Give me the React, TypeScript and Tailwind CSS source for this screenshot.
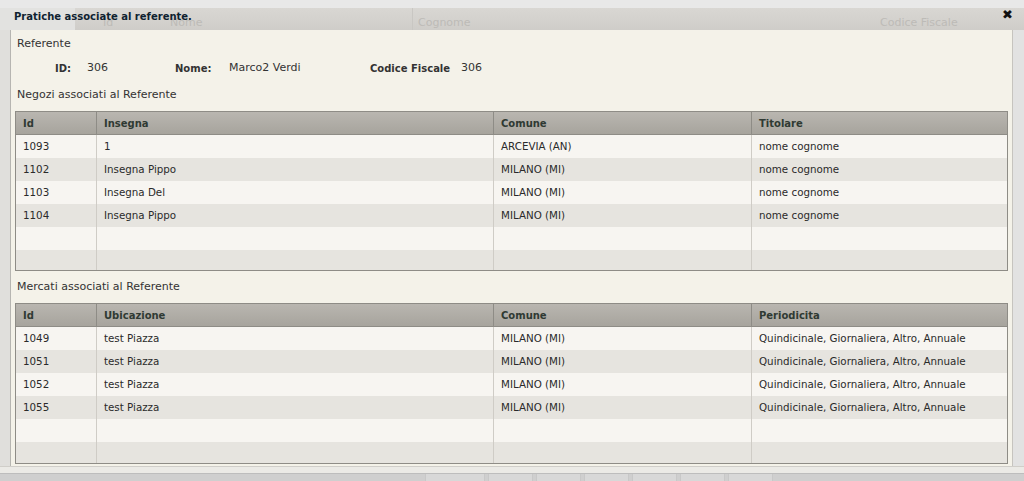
const negozi = [
  ['1093', '1', 'ARCEVIA (AN)', 'nome cognome'],
  ['1102', 'Insegna Pippo', 'MILANO (MI)', 'nome cognome'],
  ['1103', 'Insegna Del', 'MILANO (MI)', 'nome cognome'],
  ['1104', 'Insegna Pippo', 'MILANO (MI)', 'nome cognome'],
];

const mercati = [
  ['1049', 'test Piazza', 'MILANO (MI)', 'Quindicinale, Giornaliera, Altro, Annuale'],
  ['1051', 'test Piazza', 'MILANO (MI)', 'Quindicinale, Giornaliera, Altro, Annuale'],
  ['1052', 'test Piazza', 'MILANO (MI)', 'Quindicinale, Giornaliera, Altro, Annuale'],
  ['1055', 'test Piazza', 'MILANO (MI)', 'Quindicinale, Giornaliera, Altro, Annuale'],
];

const cols = ['w-[80px]', 'w-[397px]', 'w-[258px]', 'flex-1'];

function Grid({ headers, rows, last }: { headers: string[]; rows: string[][]; last: string }) {
  const filled = [...rows, ['', '', '', ''], ['', '', '', '']];
  return (
    <div className="mx-[4px] border border-[#8e8c86] bg-[#f7f5f1]">
      <div className="flex h-[23px] bg-gradient-to-b from-[#b9b6b0] to-[#a7a49d] border-b border-[#8e8c86]">
        {headers.map((h, i) => (
          <div
            key={h}
            className={`${cols[i]} ${i > 0 ? 'border-l border-[#8e8c86]' : ''} pl-[7px] flex items-center font-bold text-[10px] text-[#2f3a33]`}
          >
            {h}
          </div>
        ))}
      </div>
      {filled.map((r, ri) => (
        <div
          key={ri}
          className={`flex ${ri === 5 ? last : 'h-[23px]'} ${ri % 2 === 1 ? 'bg-[#e6e4df]' : 'bg-[#f7f5f1]'}`}
        >
          {r.map((c, ci) => (
            <div
              key={ci}
              className={`${cols[ci]} ${ci > 0 ? 'border-l border-[#cfccc6]' : ''} pl-[7px] flex items-center text-[10.3px] text-[#2a2a2a]`}
            >
              {c}
            </div>
          ))}
        </div>
      ))}
    </div>
  );
}

export default function App() {
  return (
    <div
      className="w-[1024px] h-[481px] overflow-hidden bg-[#dcdcdc] flex flex-col"
      style={{ fontFamily: '"DejaVu Sans", Verdana, sans-serif' }}
    >
      <div className="h-[8px] bg-[#e8e8e8]" />

      {/* title bar, faded page header shows through */}
      <div className="relative h-[22px] flex bg-gradient-to-b from-[#d9d7d3] to-[#cfcdc9] text-[11px] text-[#bdbbb7]">
        <div className="w-[75px] bg-[#e2e2e0]" />
        <div className="w-[95px] pl-[28px] pt-[7px]">Id</div>
        <div className="w-[242px] pt-[7px]">Nome</div>
        <div className="w-[463px] pl-[5px] pt-[7px] border-l border-[#c9c7c3]">Cognome</div>
        <div className="flex-1 pl-[5px] pt-[7px]">Codice Fiscale</div>
        <div className="absolute left-[14px] top-[1px] text-[10px] font-bold text-[#0f2230]">
          Pratiche associate al referente.
        </div>
        <div className="absolute right-[11px] top-[-3px] text-[13px] font-bold text-[#111]">✖</div>
      </div>

      <div className="flex flex-1">
        <div className="w-[11px] border-r border-[#b9b8b4] bg-[#e0dfdc]" />
        <div className="w-[1002px] h-[436px] bg-[#f4f2e9] border-r border-[#c6c4bf] shadow-[1px_1px_2px_rgba(0,0,0,0.25)] text-[#333]">
          <div className="pl-[6px] pt-[6px] h-[26px] text-[11px]">Referente</div>
          <div className="flex items-center h-[24px] pl-[44px] text-[11px]">
            <span className="w-[32px] font-bold text-[10px]">ID:</span>
            <span className="w-[88px]">306</span>
            <span className="w-[54px] font-bold text-[10px]">Nome:</span>
            <span className="w-[141px]">Marco2 Verdi</span>
            <span className="w-[91px] font-bold text-[10px]">Codice Fiscale</span>
            <span>306</span>
          </div>
          <div className="pl-[6px] h-[31px] pt-[7px] text-[11px]">Negozi associati al Referente</div>
          <Grid headers={['Id', 'Insegna', 'Comune', 'Titolare']} rows={negozi} last="h-[20px]" />
          <div className="pl-[6px] h-[32px] pt-[8px] text-[11px]">Mercati associati al Referente</div>
          <Grid headers={['Id', 'Ubicazione', 'Comune', 'Periodicita']} rows={mercati} last="h-[21px]" />
        </div>
        <div className="flex-1 bg-[#e2e2e2]" />
      </div>

      <div className="h-[7px] bg-[#ebeae6] border-t border-[#d0cec9]" />
      <div className="h-[8px] flex bg-[#cfcfcf] border-t border-[#bdbdbd]">
        <div className="w-[425px]" />
        {['w-[60px]', 'w-[45px]', 'w-[45px]', 'w-[45px]', 'w-[45px]', 'w-[45px]', 'w-[45px]'].map((w, i) => (
          <div key={i} className={`${w} mr-[3px] bg-[#d8d8d8] border-x border-[#c8c8c8]`} />
        ))}
      </div>
    </div>
  );
}
